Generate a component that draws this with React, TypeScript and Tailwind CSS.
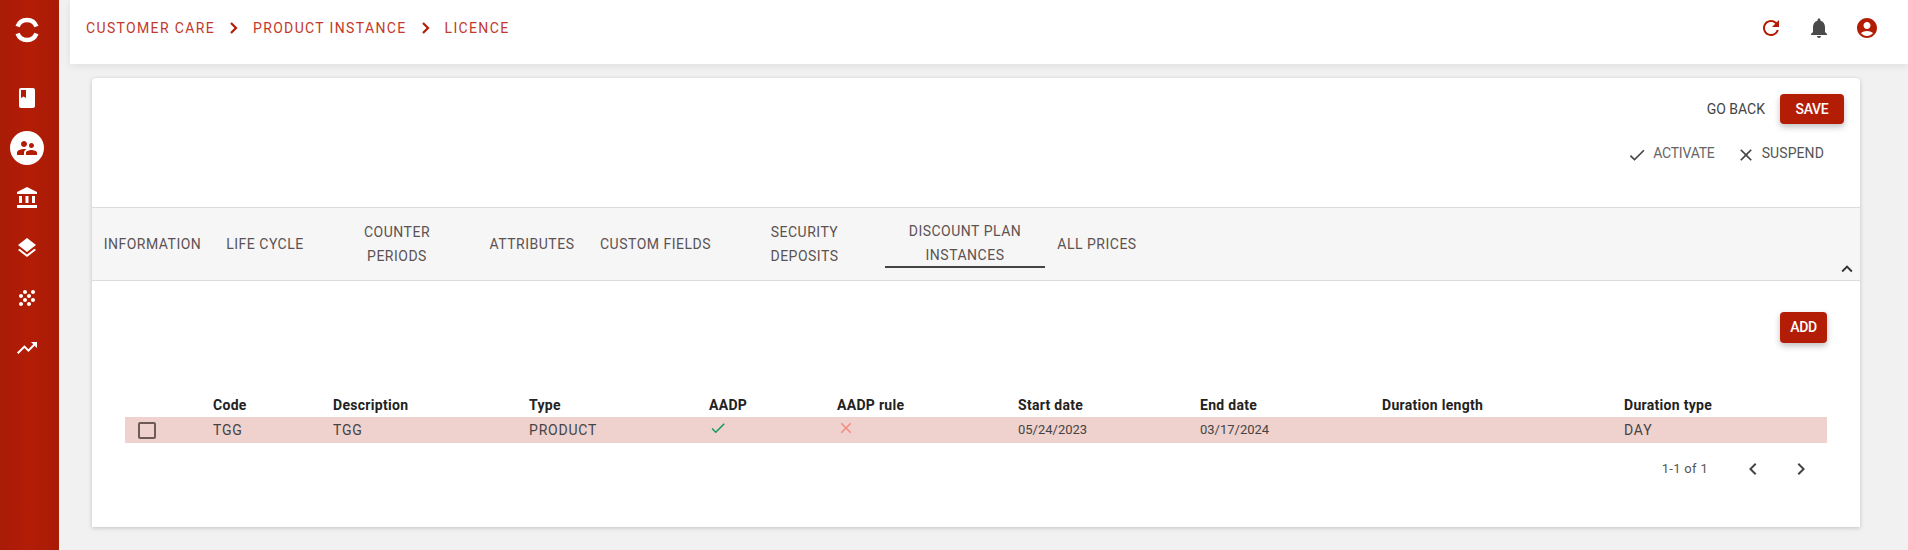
import { MdAccountBalance, MdAccountCircle, MdBook, MdCheck, MdChevronLeft, MdChevronRight, MdClose, MdExpandLess, MdGrain, MdLayers, MdNotifications, MdRefresh, MdSupervisorAccount, MdTrendingUp } from "react-icons/md";

const columns = [
  { label: "Code", width: "w-[120px]", value: "TGG" },
  { label: "Description", width: "w-[196px]", value: "TGG" },
  { label: "Type", width: "w-[180px]", value: "PRODUCT" },
  { label: "AADP", width: "w-[128px]", value: "check" },
  { label: "AADP rule", width: "w-[181px]", value: "cross" },
  { label: "Start date", width: "w-[182px]", value: "05/24/2023", date: true },
  { label: "End date", width: "w-[182px]", value: "03/17/2024", date: true },
  { label: "Duration length", width: "w-[242px]", value: "" },
  { label: "Duration type", width: "w-[203px]", value: "DAY" },
];

const tabs = [
  { label: "INFORMATION", width: "w-[121px] px-[10px]" },
  { label: "LIFE CYCLE", width: "w-[104px] px-[10px]" },
  { label: "COUNTER PERIODS", width: "w-[160px] px-[30px]" },
  { label: "ATTRIBUTES", width: "w-[110px] px-[10px]" },
  { label: "CUSTOM FIELDS", width: "w-[137px] px-[10px]" },
  { label: "SECURITY DEPOSITS", width: "w-[161px] px-[30px]" },
  { label: "DISCOUNT PLAN INSTANCES", width: "w-[160px] px-[12px]", active: true },
  { label: "ALL PRICES", width: "w-[104px] px-[10px]" },
];

function Logo() {
  return (
    <svg width="26" height="26" viewBox="0 0 26 26" fill="none" stroke="white" strokeWidth="4.5">
      <path d="M3.6 9.5A10 10 0 0 1 22.4 9.5" />
      <path d="M3.6 16.5A10 10 0 0 0 22.4 16.5" />
    </svg>
  );
}

function CrumbChevron() {
  return (
    <svg width="22" height="22" viewBox="0 0 22 22" fill="none" stroke="#b31d06" strokeWidth="2.2" className="mx-[8px]">
      <polyline points="8,6 13,11 8,16" />
    </svg>
  );
}

function Sidebar() {
  return (
    <aside className="w-[59px] shrink-0 bg-gradient-to-r from-[#a81b07] via-[#b31d06] to-[#a81b07] flex flex-col text-white">
      <div className="w-[54px] h-[60px] flex items-center justify-center"><Logo /></div>
      <nav className="mt-[13px] w-[54px] flex flex-col">
        <div className="h-[50px] flex items-center justify-center"><MdBook size={24} /></div>
        <div className="h-[50px] flex items-center justify-center">
          <div className="w-[34px] h-[34px] rounded-full bg-white flex items-center justify-center text-[#b31d06]">
            <MdSupervisorAccount size={24} />
          </div>
        </div>
        <div className="h-[50px] flex items-center justify-center"><MdAccountBalance size={24} /></div>
        <div className="h-[50px] flex items-center justify-center"><MdLayers size={24} /></div>
        <div className="h-[50px] flex items-center justify-center"><MdGrain size={24} /></div>
        <div className="h-[50px] flex items-center justify-center"><MdTrendingUp size={24} /></div>
      </nav>
    </aside>
  );
}

function Topbar() {
  return (
    <header className="h-[64px] pb-[8px] bg-white shadow-[0_2px_8px_rgba(0,0,0,0.08)] flex items-center justify-between pl-[16px] pr-[29px]">
      <div className="flex items-center text-[14px] tracking-[1.35px] text-[#c2392a]">
        <span>CUSTOMER CARE</span>
        <CrumbChevron />
        <span>PRODUCT INSTANCE</span>
        <CrumbChevron />
        <span>LICENCE</span>
      </div>
      <div className="flex items-center gap-[24px]">
        <MdRefresh size={24} className="text-[#b31d06]" />
        <MdNotifications size={24} className="text-[#4a4a4a]" />
        <MdAccountCircle size={24} className="text-[#b31d06]" />
      </div>
    </header>
  );
}

function CardHeader() {
  return (
    <div className="h-[129px] pt-[16px] pr-[16px] flex flex-col items-end">
      <div className="flex items-center">
        <span className="text-[14px] text-[#444] mr-[15px]">GO BACK</span>
        <button className="w-[64px] h-[30px] rounded bg-[#b31d06] text-white text-[14px] font-medium tracking-[-0.3px] shadow-[0_3px_6px_rgba(0,0,0,0.25)]">SAVE</button>
      </div>
      <div className="mt-[18px] flex items-center text-[14px] pr-[20px]">
        <MdCheck size={20} className="text-[#444] mr-[6px] mt-[3px]" />
        <span className="text-[#666] tracking-[-0.2px]">ACTIVATE</span>
        <MdClose size={20} className="text-[#444] ml-[21px] mr-[6px] mt-[3px]" />
        <span className="text-[#555] tracking-[0.1px]">SUSPEND</span>
      </div>
    </div>
  );
}

function Tabs() {
  return (
    <div className="relative h-[74px] bg-[#f6f6f6] border-y border-[#dcdcdc] flex items-center">
      {tabs.map((tab) => (
        <div
          key={tab.label}
          className={`${tab.width} h-[48px] shrink-0 flex items-center justify-center text-center text-[14px] tracking-[0.5px] leading-[24px] text-[#5c5252] ${tab.active ? "border-b-2 border-[#444]" : ""}`}
        >
          {tab.label}
        </div>
      ))}
      <MdExpandLess size={22} className="absolute right-[2px] bottom-0 text-[#333]" />
    </div>
  );
}

function Table() {
  return (
    <div className="text-[14px]">
      <div className="flex h-[24px] items-center font-bold text-[14px] tracking-[0.3px] text-[#222]">
        <div className="w-[88px]" />
        {columns.map((col) => (
          <div key={col.label} className={col.width}>{col.label}</div>
        ))}
      </div>
      <div className="flex h-[26px] items-center bg-[#efd1cd] text-[#444]">
        <div className="w-[88px] pl-[13px]">
          <div className="w-[18px] h-[17px] rounded-[2px] border-2 border-[#6e5a58]" />
        </div>
        {columns.map((col) => (
          <div key={col.label} className={`${col.width} ${col.date ? "text-[13px]" : "tracking-[0.8px]"}`}>
            {col.value === "check" ? (
              <MdCheck size={18} className="text-[#0f9d58] -mt-[4px]" />
            ) : col.value === "cross" ? (
              <MdClose size={18} className="text-[#f28b82] -mt-[4px]" />
            ) : (
              col.value
            )}
          </div>
        ))}
      </div>
      <div className="h-[52px] flex items-center justify-end text-[13px] tracking-[0.3px] text-[#555]">
        <span>1-1 of 1</span>
        <MdChevronLeft size={24} className="ml-[33px] text-[#444]" />
        <MdChevronRight size={24} className="ml-[24px] mr-[14px] text-[#444]" />
      </div>
    </div>
  );
}

export default function App() {
  return (
    <div className="w-[1908px] h-[550px] flex bg-[#f1f1f1] overflow-hidden font-['Roboto',sans-serif]">
      <Sidebar />
      <main className="ml-[11px] flex-1">
        <Topbar />
        <section className="mt-[14px] ml-[22px] w-[1768px] h-[449px] bg-white rounded-t shadow-[0_1px_4px_rgba(0,0,0,0.2)]">
          <CardHeader />
          <Tabs />
          <div className="px-[33px] pt-[31px]">
            <div className="flex justify-end">
              <button className="w-[47px] h-[31px] rounded bg-[#b31d06] text-white text-[14px] font-medium tracking-[-0.3px] shadow-[0_3px_6px_rgba(0,0,0,0.25)]">ADD</button>
            </div>
            <div className="mt-[50px]">
              <Table />
            </div>
          </div>
        </section>
      </main>
    </div>
  );
}
